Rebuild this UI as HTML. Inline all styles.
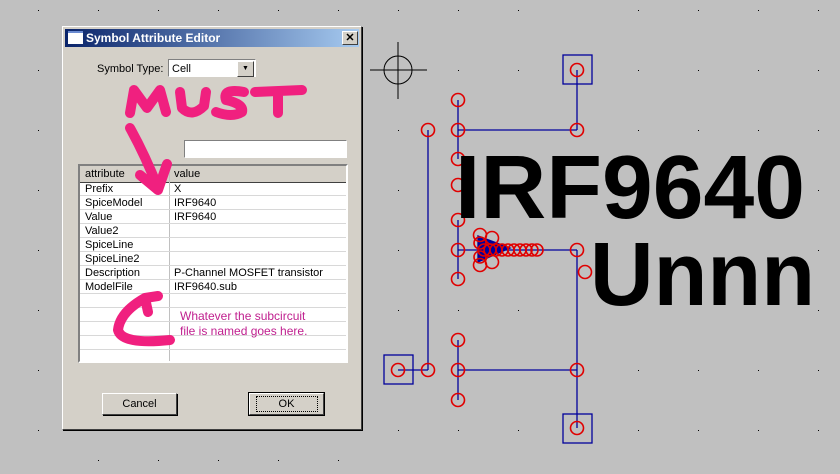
<!DOCTYPE html>
<html><head><style>
body{margin:0;width:840px;height:474px;background:#c0c0c0;position:relative;overflow:hidden;font-family:"Liberation Sans",Tahoma,sans-serif}
.dlg{position:absolute;left:62px;top:26px;width:298px;height:402px;background:#d4d0c8;border:1px solid;border-color:#fff #404040 #404040 #fff;box-shadow:1px 1px 0 #000}
.title{position:absolute;left:2px;top:2px;right:2px;height:18px;background:linear-gradient(90deg,#0a246a,#a6caf0);color:#fff;font-weight:bold;font-size:12px;line-height:18px}
.t{position:absolute;font-size:11px;color:#000;white-space:nowrap}
.btn{position:absolute;background:#d4d0c8;border:1px solid;border-color:#fff #404040 #404040 #fff;box-shadow:1px 1px 0 #000;font-size:11px;text-align:center}
</style></head><body>
<svg width="840" height="474" style="position:absolute;left:0;top:0">
<g stroke="#000" fill="none"><circle cx="398" cy="70" r="14"/><line x1="370" y1="70" x2="427" y2="70"/><line x1="398" y1="42" x2="398" y2="99"/></g>
<g stroke="#00009c" fill="none" stroke-width="1.3">
<line x1="458" y1="100" x2="458" y2="159"/><line x1="458" y1="130" x2="577" y2="130"/><line x1="577" y1="70" x2="577" y2="130"/>
<line x1="428" y1="130" x2="428" y2="370"/><line x1="398" y1="370" x2="428" y2="370"/>
<line x1="458" y1="220" x2="458" y2="279"/><line x1="458" y1="250" x2="577" y2="250"/><line x1="577" y1="250" x2="577" y2="428"/>
<line x1="458" y1="340" x2="458" y2="400"/><line x1="458" y1="370" x2="577" y2="370"/>
<rect x="563" y="55" width="29" height="29"/><rect x="384" y="355" width="29" height="29"/><rect x="563" y="414" width="29" height="29"/>
<path d="M478 236 L510 248 L478 262 Z" fill="#00009c"/>
</g>
<g stroke="#e00000" fill="none" stroke-width="1.6">
<circle cx="577" cy="70" r="6.5"/><circle cx="458" cy="100" r="6.5"/><circle cx="458" cy="130" r="6.5"/><circle cx="458" cy="159" r="6.5"/><circle cx="458" cy="185" r="6.5"/><circle cx="458" cy="220" r="6.5"/><circle cx="458" cy="250" r="6.5"/><circle cx="458" cy="279" r="6.5"/><circle cx="458" cy="340" r="6.5"/><circle cx="458" cy="370" r="6.5"/><circle cx="458" cy="400" r="6.5"/>
<circle cx="428" cy="130" r="6.5"/><circle cx="428" cy="370" r="6.5"/><circle cx="398" cy="370" r="6.5"/>
<circle cx="577" cy="130" r="6.5"/><circle cx="577" cy="250" r="6.5"/><circle cx="585" cy="272" r="6.5"/><circle cx="577" cy="370" r="6.5"/><circle cx="577" cy="428" r="6.5"/>
<circle cx="480" cy="235" r="6.5"/><circle cx="492" cy="238" r="6.5"/><circle cx="480" cy="265" r="6.5"/><circle cx="492" cy="262" r="6.5"/>
<circle cx="480" cy="243" r="6"/><circle cx="480" cy="257" r="6"/><circle cx="484" cy="250" r="6"/><circle cx="490" cy="250" r="6"/><circle cx="496" cy="250" r="6"/><circle cx="502" cy="250" r="6"/><circle cx="508" cy="250" r="6"/><circle cx="514" cy="250" r="6"/><circle cx="520" cy="250" r="6"/><circle cx="526" cy="250" r="6"/><circle cx="532" cy="250" r="6"/><circle cx="537" cy="250" r="6"/>
</g>
<text x="455" y="218" font-family="Liberation Sans" font-weight="bold" font-size="90" textLength="350" lengthAdjust="spacingAndGlyphs">IRF9640</text>
<text x="590" y="305" font-family="Liberation Sans" font-weight="bold" font-size="90" textLength="225" lengthAdjust="spacingAndGlyphs">Unnn</text>
<g fill="#000">
<rect x="398" y="130" width="1" height="1"/><rect x="518" y="70" width="1" height="1"/><rect x="458" y="70" width="1" height="1"/><rect x="638" y="70" width="1" height="1"/><rect x="698" y="70" width="1" height="1"/><rect x="758" y="70" width="1" height="1"/><rect x="818" y="70" width="1" height="1"/>
<rect x="638" y="10" width="1" height="1"/><rect x="698" y="10" width="1" height="1"/><rect x="758" y="10" width="1" height="1"/><rect x="818" y="10" width="1" height="1"/><rect x="518" y="10" width="1" height="1"/><rect x="458" y="10" width="1" height="1"/><rect x="398" y="10" width="1" height="1"/>
<rect x="638" y="130" width="1" height="1"/><rect x="698" y="130" width="1" height="1"/><rect x="758" y="130" width="1" height="1"/><rect x="818" y="130" width="1" height="1"/>
<rect x="398" y="190" width="1" height="1"/><rect x="398" y="250" width="1" height="1"/><rect x="398" y="310" width="1" height="1"/><rect x="458" y="310" width="1" height="1"/><rect x="518" y="310" width="1" height="1"/><rect x="398" y="430" width="1" height="1"/><rect x="458" y="430" width="1" height="1"/><rect x="518" y="430" width="1" height="1"/>
<rect x="638" y="370" width="1" height="1"/><rect x="698" y="370" width="1" height="1"/><rect x="758" y="370" width="1" height="1"/><rect x="818" y="370" width="1" height="1"/>
<rect x="638" y="430" width="1" height="1"/><rect x="698" y="430" width="1" height="1"/><rect x="758" y="430" width="1" height="1"/><rect x="818" y="430" width="1" height="1"/>
<rect x="818" y="190" width="1" height="1"/><rect x="818" y="250" width="1" height="1"/><rect x="818" y="310" width="1" height="1"/>
<rect x="38" y="10" width="1" height="1"/><rect x="38" y="70" width="1" height="1"/><rect x="38" y="130" width="1" height="1"/><rect x="38" y="190" width="1" height="1"/><rect x="38" y="250" width="1" height="1"/><rect x="38" y="310" width="1" height="1"/><rect x="38" y="370" width="1" height="1"/><rect x="38" y="430" width="1" height="1"/>
<rect x="98" y="10" width="1" height="1"/><rect x="158" y="10" width="1" height="1"/><rect x="218" y="10" width="1" height="1"/><rect x="278" y="10" width="1" height="1"/><rect x="338" y="10" width="1" height="1"/>
<rect x="98" y="460" width="1" height="1"/><rect x="158" y="460" width="1" height="1"/><rect x="218" y="460" width="1" height="1"/><rect x="278" y="460" width="1" height="1"/><rect x="338" y="460" width="1" height="1"/>
</g>
</svg>
<div class="dlg">
<div class="title"><span style="display:inline-block;width:15px;height:11px;background:#fff;border-top:2px solid #6a8ad0;vertical-align:-2px;margin:0 3px 0 3px"></span>Symbol Attribute Editor
<span style="position:absolute;right:1px;top:2px;width:14px;height:12px;background:#d4d0c8;border:1px solid;border-color:#fff #404040 #404040 #fff;color:#000;font-size:11px;line-height:12px;text-align:center">✕</span></div>
<div class="t" style="left:34px;top:36px">Symbol Type:</div>
<div style="position:absolute;left:105px;top:32px;height:18px;background:#fff;border:1px solid;border-color:#808080 #fff #fff #808080;font-size:11px;line-height:18px;padding-left:3px;box-sizing:border-box;width:88px">Cell<span style="position:absolute;right:1px;top:1px;width:15px;height:14px;background:#d4d0c8;border:1px solid;border-color:#fff #404040 #404040 #fff;font-size:7px;line-height:14px;text-align:center">▼</span></div>
<div style="position:absolute;left:121px;top:113px;width:163px;height:18px;background:#fff;border:1px solid;border-color:#808080 #fff #fff #808080;box-sizing:border-box"></div>
<div style="position:absolute;left:15px;top:137px;width:270px;height:199px;background:#fff;border:2px solid;border-color:#808080 #fff #fff #808080;box-sizing:border-box;font-size:11px;overflow:hidden">
<div style="position:absolute;left:0;top:0;width:266px;height:16px;background:#d4d0c8;border-bottom:1px solid #404040"></div>
<div style="position:absolute;left:89px;top:0;width:1px;height:196px;background:#c0c0c0"></div>
<div class="t" style="left:5px;top:2px">attribute</div><div class="t" style="left:94px;top:2px">value</div>
<div style="position:absolute;left:0;top:16px;width:266px;height:180px;background:repeating-linear-gradient(180deg,transparent 0 13px,#d8d8d8 13px 14px)"></div>
<div class="t" style="left:5px;top:17px">Prefix</div><div class="t" style="left:94px;top:17px">X</div>
<div class="t" style="left:5px;top:31px">SpiceModel</div><div class="t" style="left:94px;top:31px">IRF9640</div>
<div class="t" style="left:5px;top:45px">Value</div><div class="t" style="left:94px;top:45px">IRF9640</div>
<div class="t" style="left:5px;top:59px">Value2</div>
<div class="t" style="left:5px;top:73px">SpiceLine</div>
<div class="t" style="left:5px;top:87px">SpiceLine2</div>
<div class="t" style="left:5px;top:101px">Description</div><div class="t" style="left:94px;top:101px">P-Channel MOSFET transistor</div>
<div class="t" style="left:5px;top:115px">ModelFile</div><div class="t" style="left:94px;top:115px">IRF9640.sub</div>
</div>
<div class="btn" style="left:39px;top:366px;width:73px;height:20px;line-height:20px">Cancel</div>
<div class="btn" style="left:186px;top:366px;width:73px;height:20px;line-height:20px;outline:1px solid #000"><span style="display:inline-block;border:1px dotted #000;width:60px;line-height:14px;margin-top:2px">OK</span></div>
</div>
<div class="t" style="left:180px;top:309px;font-size:12px;color:#c0208f">Whatever the subcircuit</div>
<div class="t" style="left:180px;top:324px;font-size:12px;color:#c0208f">file is named goes here.</div>
<svg width="840" height="474" style="position:absolute;left:0;top:0" fill="none" stroke="#f0207f" stroke-width="10" stroke-linecap="round" stroke-linejoin="round">
<path d="M130 113 L134 90 L147 108 L160 90 L166 112"/>
<path d="M180 92 L182 108 Q192 118 204 106 L206 92"/>
<path d="M244 92 Q222 88 226 100 Q244 104 242 112 Q232 118 216 112"/>
<path d="M255 92 L302 90 M278 92 L278 113"/>
<path d="M130 128 Q145 155 158 188 M140 175 L158 190 L167 164"/>
<path d="M145 298 Q120 312 118 330 Q122 345 170 340 M145 298 L158 296 M145 298 L148 312"/>
</svg>
</body></html>
